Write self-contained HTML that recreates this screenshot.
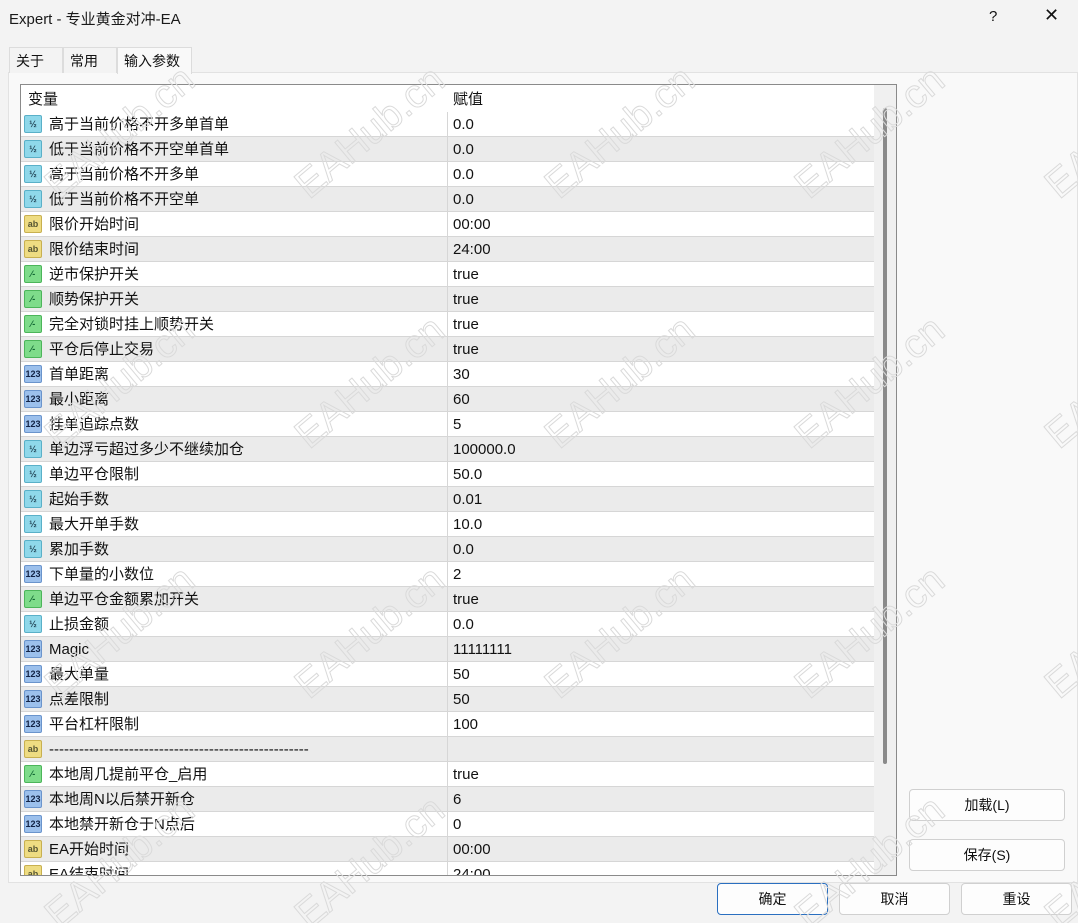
<!DOCTYPE html>
<html><head><meta charset="utf-8"><style>
*{margin:0;padding:0;box-sizing:border-box}
html,body{width:1078px;height:923px;overflow:hidden}
body{background:#f3f3f3;font-family:"Liberation Sans","Noto Sans CJK SC",sans-serif;font-size:15px;color:#111;position:relative}
.title{position:absolute;left:9px;top:8px;font-size:15px;color:#1a1a1a}
.q{position:absolute;left:989px;top:8px;font-size:15px}
.x{position:absolute;left:1044px;top:5px;font-size:18px;font-weight:300}
.tab{position:absolute;top:47px;height:26px;border:1px solid #dcdcdc;border-bottom:none;padding:0 6px;line-height:26px;font-size:14px;background:#f3f3f3}
.panel{position:absolute;left:8px;top:72px;width:1070px;height:811px;background:#f9f9f9;border:1px solid #e2e2e2}
.list{position:absolute;left:20px;top:84px;width:877px;height:792px;border:1px solid #8a8a8a;background:#fff;overflow:hidden}
.hdr{position:absolute;left:0;top:0;width:853px;height:27px;background:#fff}
.hdr span{position:absolute;top:0;line-height:30px}
.row{position:absolute;left:0;width:853px;height:25px;border-bottom:1px solid #d6d6d6;line-height:25px}
.row.g{background:#ebebeb}
.row .n{position:absolute;left:28px;top:0;white-space:nowrap}
.row .v{position:absolute;left:432px;top:0;white-space:nowrap}
.row .d{position:absolute;left:426px;top:0;width:1px;height:25px;background:#d6d6d6}
.ic{position:absolute;left:3px;top:3px;width:18px;height:18px;border-radius:2px;font-size:9px;font-weight:bold;text-align:center;line-height:17px}
.f{background:#8fd8ea;color:#245;border:1px solid #5ab0c8}
.s{background:#eedc82;color:#553;border:1px solid #c8b050}
.b{background:#7edc8a;color:#163;border:1px solid #4cb55a}
.i{background:#9cc0ec;color:#124;border:1px solid #6a94cc}
.sb{position:absolute;left:853px;top:0;width:22px;height:790px;background:#f0f0f0}
.th{position:absolute;left:9px;top:23px;width:4px;height:656px;background:#8a8a8a;border-radius:2px}
.btn{position:absolute;height:32px;border:1px solid #d0d0d0;border-radius:4px;background:#fdfdfd;text-align:center;line-height:30px;font-size:14px}
.wm{position:absolute;font-size:40px;color:transparent;-webkit-text-stroke:1px #dadada;transform:rotate(-40deg);white-space:nowrap;font-family:"Liberation Sans",sans-serif;pointer-events:none}
</style></head><body>
<div class="title">Expert - 专业黄金对冲-EA</div>
<div class="q">?</div><div class="x">✕</div>
<div class="panel"></div>
<div class="tab" style="left:9px;width:54px">关于</div>
<div class="tab" style="left:63px;width:54px">常用</div>
<div class="tab" style="left:117px;width:75px;background:#f9f9f9;height:27px">输入参数</div>
<div class="list">
<div class="hdr"><span style="left:7px">变量</span><span style="left:432px">赋值</span></div>
<div class="row" style="top:27px"><div class="ic f">½</div><span class="n">高于当前价格不开多单首单</span><i class="d"></i><span class="v">0.0</span></div>
<div class="row g" style="top:52px"><div class="ic f">½</div><span class="n">低于当前价格不开空单首单</span><i class="d"></i><span class="v">0.0</span></div>
<div class="row" style="top:77px"><div class="ic f">½</div><span class="n">高于当前价格不开多单</span><i class="d"></i><span class="v">0.0</span></div>
<div class="row g" style="top:102px"><div class="ic f">½</div><span class="n">低于当前价格不开空单</span><i class="d"></i><span class="v">0.0</span></div>
<div class="row" style="top:127px"><div class="ic s">ab</div><span class="n">限价开始时间</span><i class="d"></i><span class="v">00:00</span></div>
<div class="row g" style="top:152px"><div class="ic s">ab</div><span class="n">限价结束时间</span><i class="d"></i><span class="v">24:00</span></div>
<div class="row" style="top:177px"><div class="ic b">⁄-</div><span class="n">逆市保护开关</span><i class="d"></i><span class="v">true</span></div>
<div class="row g" style="top:202px"><div class="ic b">⁄-</div><span class="n">顺势保护开关</span><i class="d"></i><span class="v">true</span></div>
<div class="row" style="top:227px"><div class="ic b">⁄-</div><span class="n">完全对锁时挂上顺势开关</span><i class="d"></i><span class="v">true</span></div>
<div class="row g" style="top:252px"><div class="ic b">⁄-</div><span class="n">平仓后停止交易</span><i class="d"></i><span class="v">true</span></div>
<div class="row" style="top:277px"><div class="ic i">123</div><span class="n">首单距离</span><i class="d"></i><span class="v">30</span></div>
<div class="row g" style="top:302px"><div class="ic i">123</div><span class="n">最小距离</span><i class="d"></i><span class="v">60</span></div>
<div class="row" style="top:327px"><div class="ic i">123</div><span class="n">挂单追踪点数</span><i class="d"></i><span class="v">5</span></div>
<div class="row g" style="top:352px"><div class="ic f">½</div><span class="n">单边浮亏超过多少不继续加仓</span><i class="d"></i><span class="v">100000.0</span></div>
<div class="row" style="top:377px"><div class="ic f">½</div><span class="n">单边平仓限制</span><i class="d"></i><span class="v">50.0</span></div>
<div class="row g" style="top:402px"><div class="ic f">½</div><span class="n">起始手数</span><i class="d"></i><span class="v">0.01</span></div>
<div class="row" style="top:427px"><div class="ic f">½</div><span class="n">最大开单手数</span><i class="d"></i><span class="v">10.0</span></div>
<div class="row g" style="top:452px"><div class="ic f">½</div><span class="n">累加手数</span><i class="d"></i><span class="v">0.0</span></div>
<div class="row" style="top:477px"><div class="ic i">123</div><span class="n">下单量的小数位</span><i class="d"></i><span class="v">2</span></div>
<div class="row g" style="top:502px"><div class="ic b">⁄-</div><span class="n">单边平仓金额累加开关</span><i class="d"></i><span class="v">true</span></div>
<div class="row" style="top:527px"><div class="ic f">½</div><span class="n">止损金额</span><i class="d"></i><span class="v">0.0</span></div>
<div class="row g" style="top:552px"><div class="ic i">123</div><span class="n">Magic</span><i class="d"></i><span class="v">11111111</span></div>
<div class="row" style="top:577px"><div class="ic i">123</div><span class="n">最大单量</span><i class="d"></i><span class="v">50</span></div>
<div class="row g" style="top:602px"><div class="ic i">123</div><span class="n">点差限制</span><i class="d"></i><span class="v">50</span></div>
<div class="row" style="top:627px"><div class="ic i">123</div><span class="n">平台杠杆限制</span><i class="d"></i><span class="v">100</span></div>
<div class="row g" style="top:652px"><div class="ic s">ab</div><span class="n">----------------------------------------------------</span><i class="d"></i><span class="v"></span></div>
<div class="row" style="top:677px"><div class="ic b">⁄-</div><span class="n">本地周几提前平仓_启用</span><i class="d"></i><span class="v">true</span></div>
<div class="row g" style="top:702px"><div class="ic i">123</div><span class="n">本地周N以后禁开新仓</span><i class="d"></i><span class="v">6</span></div>
<div class="row" style="top:727px"><div class="ic i">123</div><span class="n">本地禁开新仓于N点后</span><i class="d"></i><span class="v">0</span></div>
<div class="row g" style="top:752px"><div class="ic s">ab</div><span class="n">EA开始时间</span><i class="d"></i><span class="v">00:00</span></div>
<div class="row" style="top:777px"><div class="ic s">ab</div><span class="n">EA结束时间</span><i class="d"></i><span class="v">24:00</span></div>
<div class="sb"><div class="th"></div></div>
</div>
<div class="btn" style="left:909px;top:789px;width:156px">加载(L)</div>
<div class="btn" style="left:909px;top:839px;width:156px">保存(S)</div>
<div class="btn" style="left:717px;top:883px;width:111px;border:1px solid #2a6fc0">确定</div>
<div class="btn" style="left:839px;top:883px;width:111px">取消</div>
<div class="btn" style="left:961px;top:883px;width:111px">重设</div>
<div class="wm" style="left:30px;top:110px">EAHub.cn</div>
<div class="wm" style="left:280px;top:110px">EAHub.cn</div>
<div class="wm" style="left:530px;top:110px">EAHub.cn</div>
<div class="wm" style="left:780px;top:110px">EAHub.cn</div>
<div class="wm" style="left:1030px;top:110px">EAHub.cn</div>
<div class="wm" style="left:30px;top:360px">EAHub.cn</div>
<div class="wm" style="left:280px;top:360px">EAHub.cn</div>
<div class="wm" style="left:530px;top:360px">EAHub.cn</div>
<div class="wm" style="left:780px;top:360px">EAHub.cn</div>
<div class="wm" style="left:1030px;top:360px">EAHub.cn</div>
<div class="wm" style="left:30px;top:610px">EAHub.cn</div>
<div class="wm" style="left:280px;top:610px">EAHub.cn</div>
<div class="wm" style="left:530px;top:610px">EAHub.cn</div>
<div class="wm" style="left:780px;top:610px">EAHub.cn</div>
<div class="wm" style="left:1030px;top:610px">EAHub.cn</div>
<div class="wm" style="left:30px;top:840px">EAHub.cn</div>
<div class="wm" style="left:280px;top:840px">EAHub.cn</div>
<div class="wm" style="left:780px;top:840px">EAHub.cn</div>
<div class="wm" style="left:1030px;top:840px">EAHub.cn</div>
</body></html>
